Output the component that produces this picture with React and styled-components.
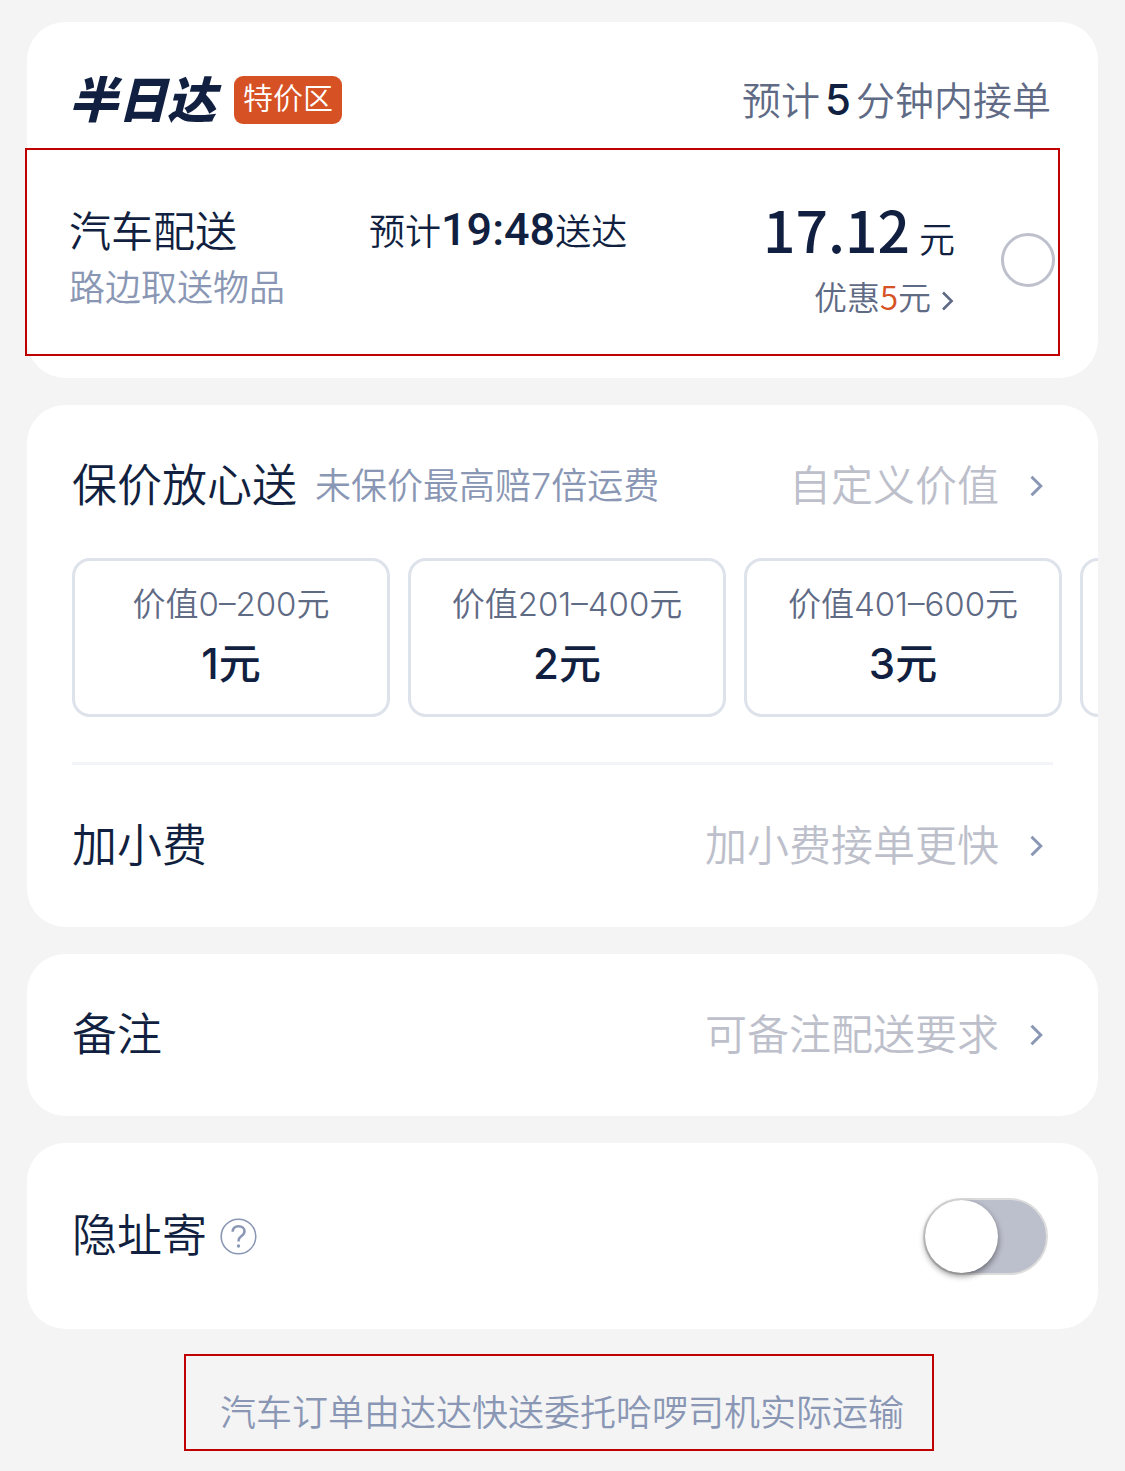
import { useState } from "react";
import styled, { createGlobalStyle } from "styled-components";

const GlobalStyle = createGlobalStyle`
  * {
    box-sizing: border-box;
  }

  body {
    margin: 0;
    background-color: #f4f4f4;
  }

  button {
    font: inherit;
    color: inherit;
    background: none;
    border: none;
    padding: 0;
    cursor: pointer;
  }
`;

const Page = styled.main`
  display: flex;
  flex-direction: column;
  gap: 27px;
  padding: 22px 27px 20px;
  overflow: hidden;
  font-family: Inter, "Noto Sans CJK SC", sans-serif;
  font-weight: 350;
  color: #111f40;
`;

const Card = styled.section`
  background-color: #ffffff;
  border-radius: 38px;
`;

const ServiceCard = styled(Card)`
  padding-bottom: 22px;
`;

const ServiceHeader = styled.header`
  display: flex;
  justify-content: space-between;
  align-items: center;
  height: 126px;
  padding: 54px 47px 24px 42px;
`;

const Brand = styled.div`
  display: flex;
  align-items: center;
  gap: 18px;
`;

const BrandName = styled.h1`
  margin: 0;
  padding-top: 2px;
  font-size: 49px;
  font-weight: 900;
  font-style: italic;
  line-height: 48px;
`;

const Badge = styled.span`
  padding: 0 9px 3px;
  border-radius: 9px;
  background-color: #d65224;
  color: #ffffff;
  font-size: 30px;
  line-height: 45px;
`;

const Eta = styled.p`
  display: flex;
  align-items: baseline;
  gap: 5px;
  margin: 0;
  color: #5f6a85;
  font-size: 39px;
  line-height: 52px;

  strong {
    color: #111f40;
    font-size: 42px;
    font-weight: 500;
  }
`;

const Option = styled.label`
  display: grid;
  grid-template-columns: 300px 1fr auto 54px;
  margin: 0 38px 0 -2px;
  padding: 54px 3px 38px 42px;
  border: 2px solid #c00000;
  cursor: pointer;
`;

const OptionTitle = styled.div`
  font-size: 42px;
  line-height: 56px;
`;

const OptionNote = styled.div`
  color: #8a97b4;
  font-size: 36px;
  line-height: 56px;
`;

const ArriveTime = styled.div`
  font-size: 36px;
  line-height: 52px;

  strong {
    font-family: Roboto, sans-serif;
    font-size: 45px;
    font-weight: 500;
  }
`;

const PriceColumn = styled.div`
  display: flex;
  flex-direction: column;
  align-items: flex-end;
  margin-right: 46px;
  font-family: "Noto Sans CJK SC", sans-serif;
`;

const Price = styled.div`
  display: flex;
  align-items: baseline;
  gap: 9px;
  height: 72px;
  font-size: 36px;
  line-height: 48px;

  strong {
    font-size: 57px;
    font-weight: 500;
  }
`;

const Discount = styled.button`
  display: flex;
  align-items: center;
  gap: 6px;
  color: #5f6a85;
  font-size: 33px;
  line-height: 40px;

  em {
    color: #d65224;
    font-style: normal;
  }
`;

const Radio = styled.input`
  appearance: none;
  align-self: center;
  width: 54px;
  height: 54px;
  margin: 0;
  border: 3px solid #bec0cc;
  border-radius: 50%;
  cursor: pointer;

  &:checked {
    border: 16px solid #111f40;
  }
`;

const Row = styled.div`
  display: flex;
  align-items: center;
  justify-content: space-between;
  min-height: ${(props) => (props.$tall ? 186 : 162)}px;
  padding: 0 45px;
`;

const InsuranceRow = styled(Row)`
  min-height: 153px;
  padding-bottom: 4px;
  padding-top: 13px;
`;

const RowHead = styled.div`
  display: flex;
  align-items: center;
  gap: ${(props) => props.$gap || 18}px;
`;

const RowTitle = styled.h2`
  margin: 0;
  font-size: 45px;
  font-weight: inherit;
  line-height: 64px;
`;

const RowNote = styled.span`
  color: #8a97b4;
  font-size: 36px;
  line-height: 64px;
`;

const RowLink = styled.button`
  display: flex;
  align-items: center;
  gap: 24px;
  color: #bdbfcb;
  font-size: 42px;
  line-height: 64px;
`;

const ValueList = styled.div`
  display: flex;
  gap: 18px;
  padding-left: 45px;
  overflow: hidden;
`;

const ValueOption = styled.button`
  flex: none;
  display: flex;
  flex-direction: column;
  align-items: center;
  width: 318px;
  height: 159px;
  padding-top: 15px;
  border: 3px solid #dde2eb;
  border-radius: 18px;
`;

const ValueRange = styled.span`
  color: #5f6a85;
  font-size: 33px;
  line-height: 56px;
`;

const ValuePrice = styled.strong`
  font-size: 42px;
  font-weight: 500;
  line-height: 64px;
`;

const Divider = styled.hr`
  height: 3px;
  margin: 45px 45px 0;
  border: none;
  background-color: #f2f4f7;
`;

const HelpButton = styled.button`
  display: flex;
  color: #8a97b4;
`;

const Switch = styled.input`
  appearance: none;
  display: flex;
  width: 125px;
  height: 77px;
  margin: 0 5px 0 0;
  padding: 0;
  border: 2px solid #dcdcdc;
  border-radius: 39px;
  background-color: #bcbfcc;
  cursor: pointer;

  &::before {
    content: "";
    width: 73px;
    height: 73px;
    border-radius: 50%;
    background-color: #ffffff;
    box-shadow: 0 3px 6px rgba(0, 0, 0, 0.45);
  }

  &:checked {
    justify-content: flex-end;
    background-color: #111f40;
  }
`;

const Footer = styled.footer`
  align-self: center;
  margin: -2px 7px 0 0;
  padding: 31px 28px 10px 34px;
  border: 2px solid #c00000;
  color: #8a97b4;
  font-size: 36px;
  line-height: 52px;
`;

const values = [
  { id: "a", range: "价值0–200元", price: "1元" },
  { id: "b", range: "价值201–400元", price: "2元" },
  { id: "c", range: "价值401–600元", price: "3元" },
  { id: "more" },
];

function Arrow() {
  return (
    <svg width="30" height="30" viewBox="0 0 30 30" fill="none" stroke="#8a97b4" strokeWidth="3" aria-hidden="true">
      <path d="M8.500 5.700l9.300 9.300-9.300 9.300" />
    </svg>
  );
}

function SmallArrow() {
  return (
    <svg width="18" height="34" viewBox="0 0 18 34" fill="none" stroke="#5f6a85" strokeWidth="2.600" aria-hidden="true">
      <path d="M6 13.500l8.600 8.500L6 30.500" />
    </svg>
  );
}

function HelpIcon() {
  return (
    <svg width="37" height="37" viewBox="0 0 37 37" fill="none" stroke="currentColor" aria-hidden="true">
      <circle cx="18.500" cy="18.500" r="17.300" strokeWidth="1.600" />
      <path d="M12.600 13.800c.2-3.500 2.600-5.600 6-5.600 3.500 0 5.900 2.100 5.900 5 0 2.300-1.200 3.500-3 4.800-2 1.500-2.900 2.600-2.900 4.600v.9" strokeWidth="2.500" />
      <circle cx="18.500" cy="28" r="1.700" fill="currentColor" stroke="none" />
    </svg>
  );
}

export default function App() {
  const [picked, setPicked] = useState(false);
  const [hidden, setHidden] = useState(false);

  return (
    <>
      <GlobalStyle />
      <Page lang="zh-CN">
        <ServiceCard>
          <ServiceHeader>
            <Brand>
              <BrandName>半日达</BrandName>
              <Badge>特价区</Badge>
            </Brand>
            <Eta>
              预计<strong>5</strong>分钟内接单
            </Eta>
          </ServiceHeader>
          <Option>
            <div>
              <OptionTitle>汽车配送</OptionTitle>
              <OptionNote>路边取送物品</OptionNote>
            </div>
            <ArriveTime>
              预计<strong>19:48</strong>送达
            </ArriveTime>
            <PriceColumn>
              <Price>
                <strong>17.12</strong>元
              </Price>
              <Discount type="button">
                <span>
                  优惠<em>5</em>元
                </span>
                <SmallArrow />
              </Discount>
            </PriceColumn>
            <Radio type="radio" name="service" checked={picked} onChange={() => setPicked(true)} />
          </Option>
        </ServiceCard>

        <Card>
          <InsuranceRow>
            <RowHead>
              <RowTitle>保价放心送</RowTitle>
              <RowNote>未保价最高赔7倍运费</RowNote>
            </RowHead>
            <RowLink type="button">
              自定义价值
              <Arrow />
            </RowLink>
          </InsuranceRow>
          <ValueList>
            {values.map((value) => (
              <ValueOption key={value.id} type="button">
                <ValueRange>{value.range}</ValueRange>
                <ValuePrice>{value.price}</ValuePrice>
              </ValueOption>
            ))}
          </ValueList>
          <Divider />
          <Row>
            <RowTitle>加小费</RowTitle>
            <RowLink type="button">
              加小费接单更快
              <Arrow />
            </RowLink>
          </Row>
        </Card>

        <Card>
          <Row>
            <RowTitle>备注</RowTitle>
            <RowLink type="button">
              可备注配送要求
              <Arrow />
            </RowLink>
          </Row>
        </Card>

        <Card>
          <Row $tall>
            <RowHead $gap={13}>
              <RowTitle as="label" htmlFor="hide-address">
                隐址寄
              </RowTitle>
              <HelpButton type="button" aria-label="隐址寄">
                <HelpIcon />
              </HelpButton>
            </RowHead>
            <Switch
              id="hide-address"
              type="checkbox"
              role="switch"
              checked={hidden}
              onChange={(e) => setHidden(e.target.checked)}
            />
          </Row>
        </Card>

        <Footer>汽车订单由达达快送委托哈啰司机实际运输</Footer>
      </Page>
    </>
  );
}
